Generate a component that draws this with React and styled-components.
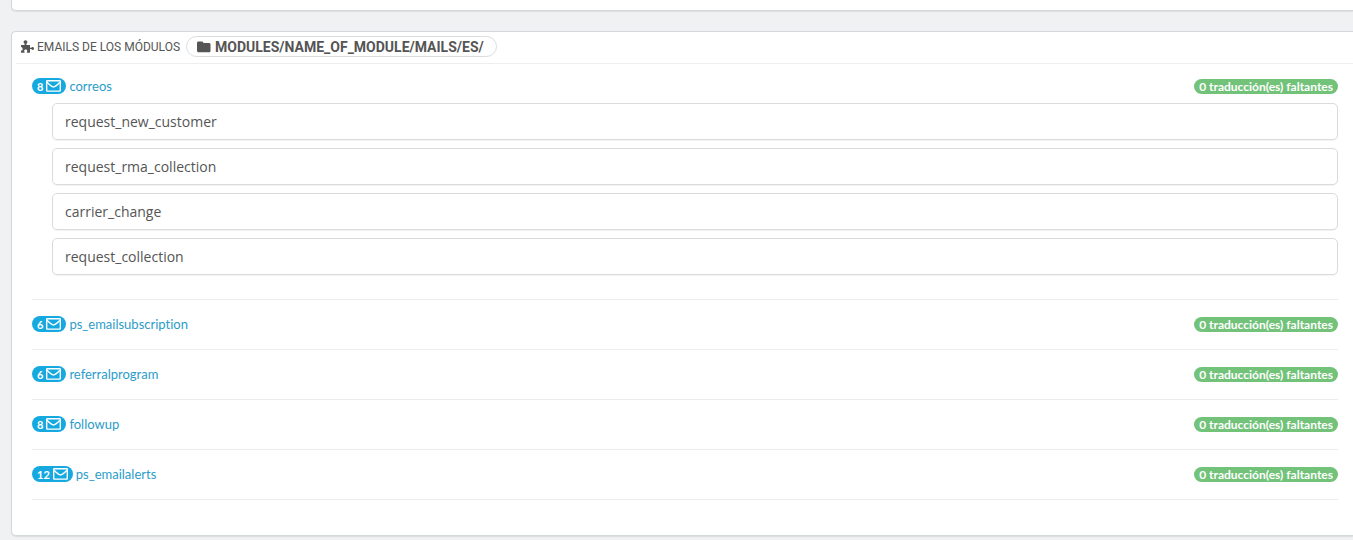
import React from "react";
import styled, { createGlobalStyle } from "styled-components";

const condensed = `"Ubuntu Condensed", Lato, sans-serif`;
const heading = `"Ubuntu Condensed", Roboto, sans-serif`;

const GlobalStyle = createGlobalStyle`
  *, *::before, *::after { box-sizing: border-box; }
  body {
    margin: 0;
    background: #eff1f2;
    color: #555;
    font-family: "Open Sans", sans-serif;
    font-size: 14px;
  }
`;

const Page = styled.main`
  display: flex;
  flex-direction: column;
  gap: 20px;
  padding: 0 0 20px 11px;
  overflow: hidden;
`;

const Panel = styled.section`
  background: #fff;
  border: 1px solid #d3d8db;
  border-right: 0;
  border-radius: 5px 0 0 5px;
  box-shadow: 0 1px 1px rgba(0, 0, 0, 0.08);
`;

const PreviousPanel = styled(Panel)`
  height: 11px;
  border-top: 0;
  border-top-left-radius: 0;
`;

const PanelHeading = styled.h3`
  display: flex;
  align-items: center;
  gap: 3px;
  height: 32px;
  margin: 0 0 0 4px;
  padding: 0 0 2px 5px;
  border-bottom: 1px solid #eee;
  font-family: ${heading};
  font-size: 12px;
  font-weight: 400;
  text-transform: uppercase;
  white-space: nowrap;
`;

const PathBadge = styled.span`
  display: inline-flex;
  align-items: center;
  gap: 4px;
  height: 21px;
  margin-left: 3px;
  padding: 0 12px 0 10px;
  border: 1px solid #d9dddf;
  border-radius: 11px;
  font-size: 14px;
  font-weight: 700;
`;

const ModuleList = styled.ul`
  list-style: none;
  margin: 0;
  padding: 12px 15px 35px 20px;
`;

const Module = styled.li`
  padding-bottom: ${(p) => (p.$open ? 24 : 15)}px;
  border-bottom: 1px solid #eaedef;

  & + & { padding-top: 14px; }
`;

const ModuleRow = styled.div`
  display: flex;
  align-items: center;
  justify-content: space-between;
  height: 20px;
`;

const ModuleLink = styled.a`
  display: inline-flex;
  align-items: center;
  gap: 3px;
  color: #2b9cc9;
  font-family: ${condensed};
  font-size: 13px;
  font-variant-ligatures: none;
  line-height: 20px;
  text-decoration: none;
`;

const Pill = styled.span`
  display: inline-flex;
  align-items: center;
  gap: 3px;
  height: ${(p) => (p.$success ? 15 : 16)}px;
  padding: 0 5px;
  border-radius: 8px;
  background: ${(p) => (p.$success ? "#72c279" : "#16a9e0")};
  color: #fff;
  font-family: ${condensed};
  font-size: ${(p) => (p.$success ? 12 : 11)}px;
  font-weight: 700;
  line-height: 15px;
  white-space: nowrap;
`;

const EmailList = styled.ul`
  display: flex;
  flex-direction: column;
  gap: 8px;
  list-style: none;
  margin: 0;
  padding: 7px 0 0 20px;
`;

const EmailLink = styled.a`
  display: block;
  padding: 8px 12px;
  border: 1px solid #d9dcde;
  border-radius: 5px;
  box-shadow: 0 1px 1px rgba(0, 0, 0, 0.05);
  color: #555;
  line-height: 19px;
  text-decoration: none;
`;

const PuzzleIcon = () => (
  <svg width="13" height="13" viewBox="0 0 13 13" fill="currentColor" aria-hidden="true">
    <path d="M0 5h3.600v-1.200C3 3.400 2.600 2.800 2.600 2.100 2.600.9 3.400.2 4.500.2s1.900.7 1.900 1.900c0 .7-.4 1.300-1 1.700V5H9v2.700h1.200c.3-.5.8-.8 1.400-.8.900 0 1.400.6 1.400 1.500s-.5 1.500-1.400 1.500c-.6 0-1.100-.3-1.400-.8H9v3.700H6.100c-.4 0-.4-.4-.2-.8.3-.5.4-.9.3-1.300-.1-.7-.7-1.100-1.500-1.100s-1.400.4-1.500 1.100c0 .5.100.8.4 1.300.2.400.1.800-.3.800H0v-2.600c.8.600 1.700.1 1.700-1S.8 6.600 0 7.200z" />
  </svg>
);

const FolderIcon = () => (
  <svg width="14" height="12" viewBox="0 0 14 12" fill="currentColor" aria-hidden="true">
    <path d="M1.500.5h3.300C5.700.5 6.300 1 6.300 2h5.700c1 0 1.500.6 1.500 1.500v6.300c0 1-.6 1.500-1.500 1.500H1.500C.6 11.300 0 10.700 0 9.800V2C0 1.100.6.5 1.500.5z" />
  </svg>
);

const EnvelopeIcon = () => (
  <svg width="15" height="12" viewBox="0 0 15 12" fill="none" stroke="currentColor" strokeWidth="1.400" aria-hidden="true">
    <rect x=".7" y=".7" width="13.600" height="10.400" rx=".5" />
    <path d="M1 2.300C3 4.300 5.700 7 7.500 7S12 4.300 14 2.300" />
  </svg>
);

const modules = [
  {
    name: "correos",
    count: 8,
    emails: ["request_new_customer", "request_rma_collection", "carrier_change", "request_collection"],
  },
  { name: "ps_emailsubscription", count: 6 },
  { name: "referralprogram", count: 6 },
  { name: "followup", count: 8 },
  { name: "ps_emailalerts", count: 12 },
];

export default function App() {
  return (
    <>
      <GlobalStyle />
      <Page>
        <PreviousPanel />
        <Panel>
          <PanelHeading>
            <PuzzleIcon />
            Emails de los módulos
            <PathBadge>
              <FolderIcon />
              modules/name_of_module/mails/es/
            </PathBadge>
          </PanelHeading>
          <ModuleList>
            {modules.map(({ name, count, emails }) => (
              <Module key={name} $open={Boolean(emails)}>
                <ModuleRow>
                  <ModuleLink href={`#${name}`}>
                    <Pill>
                      {count}
                      <EnvelopeIcon />
                    </Pill>
                    {name}
                  </ModuleLink>
                  <Pill $success>0 traducción(es) faltantes</Pill>
                </ModuleRow>
                {emails && (
                  <EmailList>
                    {emails.map((email) => (
                      <li key={email}>
                        <EmailLink href={`#${email}`}>{email}</EmailLink>
                      </li>
                    ))}
                  </EmailList>
                )}
              </Module>
            ))}
          </ModuleList>
        </Panel>
      </Page>
    </>
  );
}
